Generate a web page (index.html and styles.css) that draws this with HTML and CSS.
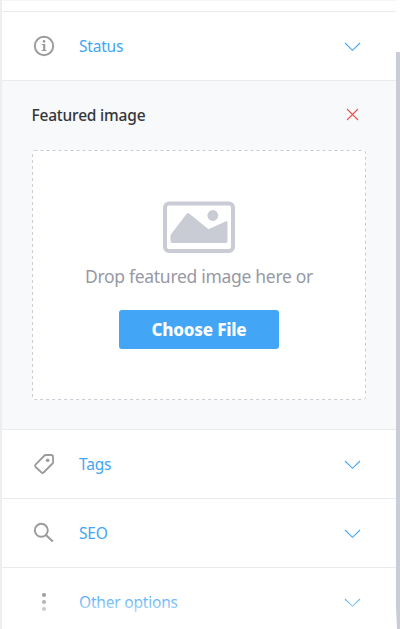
FILE: index.html
```html
<!DOCTYPE html>
<html lang="en">
<head>
<meta charset="utf-8">
<title>Post settings</title>
<link rel="stylesheet" href="styles.css">
</head>
<body>
<div class="page">
<main class="panel">
  <div class="previous"></div>
  <section class="row">
    <svg class="icon" viewBox="0 0 22 22"><circle cx="11" cy="11" r="9.2" fill="none" stroke="#9b9b9b" stroke-width="1.9"/><circle cx="11" cy="6.4" r="1.35" fill="#9b9b9b"/><path d="M8.7 8.9h3.6v6h1.2v1.1H8.7v-1.1h1.4V10H8.7z" fill="#9b9b9b"/></svg>
    <span class="label status">Status</span>
    <svg class="chevron" viewBox="0 0 17 10"><path d="M1 1l7.5 7.3L16 1"/></svg>
  </section>
  <section class="featured">
    <header class="heading"><h2>Featured image</h2>
      <svg class="close" viewBox="0 0 13 13"><path d="M1 1l11 11M12 1L1 12"/></svg>
    </header>
    <div class="drop">
      <svg class="dash" viewBox="0 0 334 250"><rect x=".5" y=".5" width="333" height="249" rx="2"/></svg>
      <svg class="picture" viewBox="0 0 72 52"><rect x="2" y="2.5" width="68" height="47.5" rx="4" fill="#fff" stroke="#c9ccd4" stroke-width="4"/><path d="M7.5 34L23.5 13q1.5-2 3.2 0L45.5 28.3 62.5 20.5q2-1 2 1V40q0 2-2 2H9.5q-2 0-2-2z" fill="#c9ccd4"/><circle cx="49.8" cy="14.5" r="5.4" fill="#c9ccd4"/></svg>
      <p class="hint">Drop featured image here or</p>
      <button class="choose" type="button">Choose File</button>
    </div>
  </section>
  <section class="row">
    <svg class="icon" viewBox="0 0 22 22"><path d="M12 2h6.2Q20 2 20 3.8V10L10.6 19.5q-1 1-2 0L2.5 14q-1-1.2 0-2.3z" fill="none" stroke="#9b9b9b" stroke-width="1.8" stroke-linejoin="round"/><circle cx="14.7" cy="7.3" r="1.8" fill="#9b9b9b"/></svg>
    <span class="label tags">Tags</span>
    <svg class="chevron" viewBox="0 0 17 10"><path d="M1 1l7.5 7.3L16 1"/></svg>
  </section>
  <section class="row">
    <svg class="icon" viewBox="0 0 22 22"><circle cx="8.3" cy="8.3" r="6.5" fill="none" stroke="#9b9b9b" stroke-width="1.9"/><path d="M12.9 12.9l6.9 6.7" fill="none" stroke="#9b9b9b" stroke-width="2.1"/></svg>
    <span class="label seo">SEO</span>
    <svg class="chevron" viewBox="0 0 17 10"><path d="M1 1l7.5 7.3L16 1"/></svg>
  </section>
  <section class="row">
    <svg class="icon" viewBox="0 0 22 22" fill="#9b9b9b"><circle cx="11" cy="4" r="2.1"/><circle cx="11" cy="11" r="2.1"/><circle cx="11" cy="18" r="2.1"/></svg>
    <span class="label options">Other options</span>
    <svg class="chevron" viewBox="0 0 17 10"><path d="M1 1l7.5 7.3L16 1"/></svg>
  </section>
</main>
<aside class="track"><div class="thumb"></div></aside>
<div class="fade"></div>
</div>
</body>
</html>
```

FILE: styles.css
```css
* { box-sizing: border-box; }
body { margin: 0; background: #fff; font-family: "Noto Sans", "Open Sans", sans-serif; }
.page { position: relative; display: flex; width: 400px; height: 629px; overflow: hidden; }
.panel { width: 396px; border-left: 2px solid #eee; }
.previous { height: 12px; border-top: 1px solid #f6f6f7; border-bottom: 1px solid #ebebed; }
.row { display: flex; align-items: center; height: 69px; padding: 0 35px 0 31px; border-bottom: 1px solid #ebebed; }
.icon { width: 22px; height: 22px; margin-right: 24px; }
.label { color: #42a5f5; font-size: 15.5px; line-height: 22px; letter-spacing: -.2px; white-space: nowrap; }
.chevron { width: 17px; height: 10px; margin-left: auto; margin-top: 2px; fill: none; stroke: #42a5f5; stroke-width: 1.1; }
.featured { height: 349px; padding: 23px 30px 0; background: #f7f9fb; border-bottom: 1px solid #ebebed; }
.heading { display: flex; align-items: center; justify-content: space-between; height: 22px; padding-right: 7px; }
.heading h2 { margin: 0 0 0 -.5px; color: #343639; font-size: 15.5px; font-weight: 500; line-height: 22px; letter-spacing: -.2px; white-space: nowrap; }
.close { width: 13px; height: 13px; margin-top: -1px; fill: none; stroke: #ef5350; stroke-width: 1.1; }
.drop { position: relative; display: flex; flex-direction: column; align-items: center; width: 334px; height: 250px; margin-top: 24px; padding-top: 51px; background: #fff; border-radius: 2px; }
.dash { position: absolute; inset: 0; width: 334px; height: 250px; fill: none; stroke: #c9ccd4; stroke-dasharray: 3 3; }
.picture { width: 72px; height: 52px; }
.hint { margin: 10px 0 0; color: #9799a5; font-size: 17.5px; line-height: 26px; letter-spacing: -.3px; white-space: nowrap; }
.choose { width: 160px; height: 39px; margin-top: 21px; padding: 0; color: #fff; background: #42a5f5; border: 0; border-radius: 3px; font: 800 17px/39px "Noto Sans", "Open Sans", sans-serif; letter-spacing: -.2px; }
.track { width: 4px; padding-top: 52px; }
.thumb { height: 577px; background: #c9ccd4; clip-path: polygon(0 0, 100% 0, 100% 100%, 1px 100%, 0 96%); }
.fade { position: absolute; left: 2px; right: 4px; bottom: 0; height: 36px; background: linear-gradient(rgba(255,255,255,0), #fff 90%); }
```
